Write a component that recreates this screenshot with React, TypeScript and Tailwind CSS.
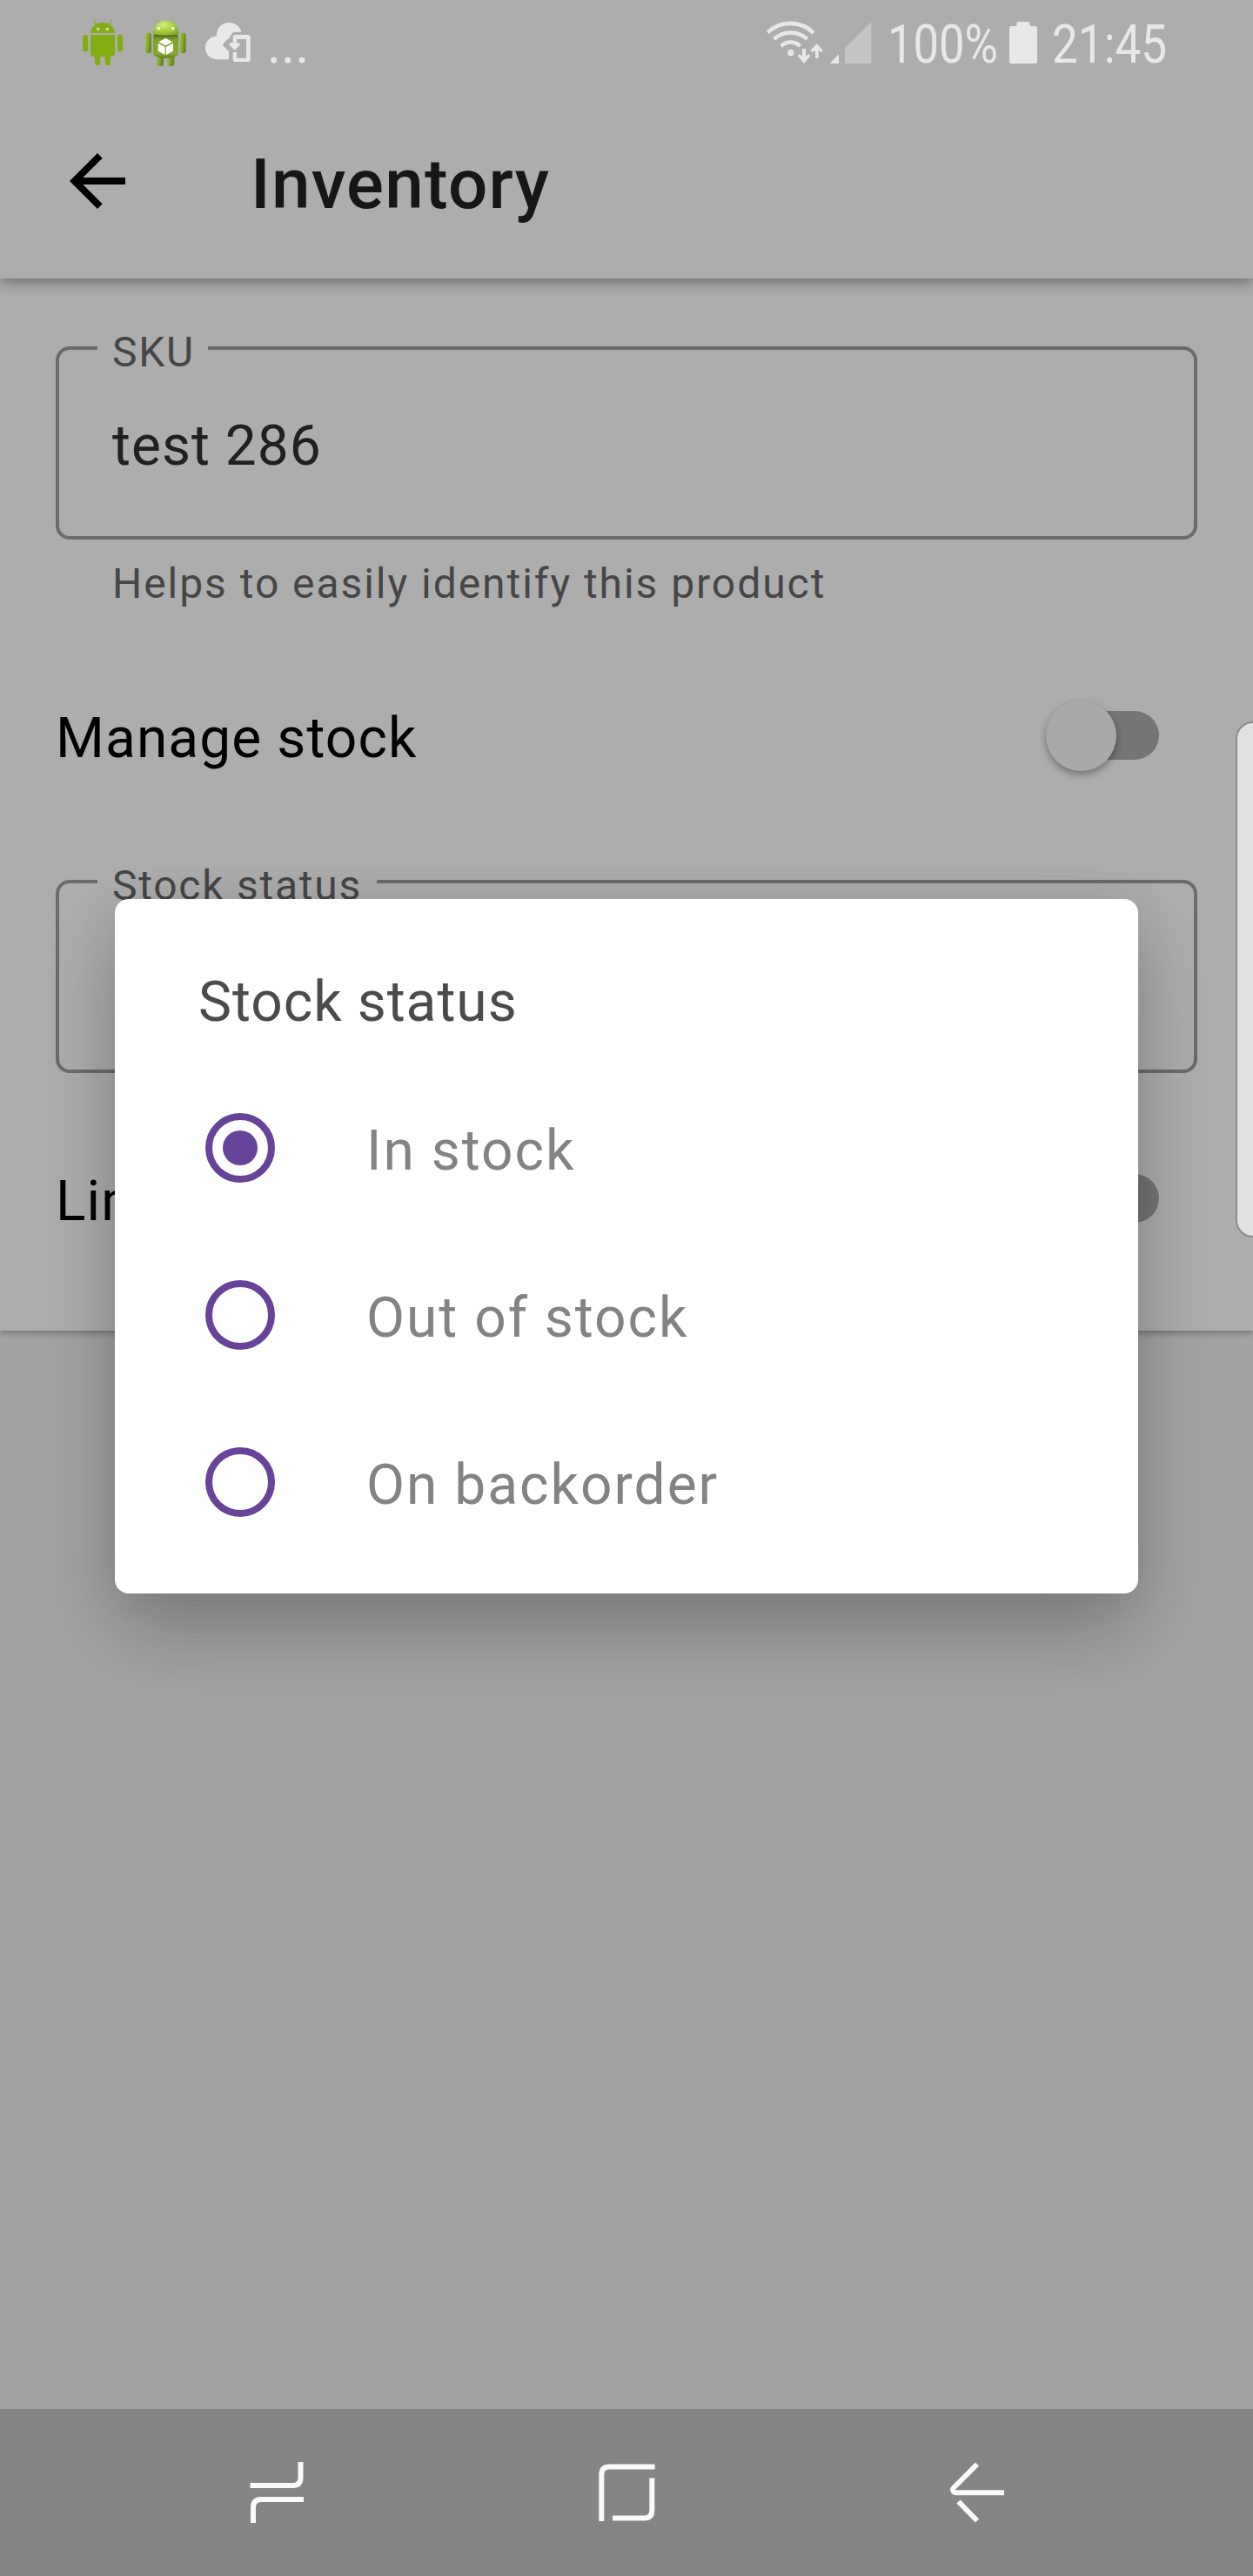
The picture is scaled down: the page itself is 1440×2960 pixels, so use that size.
import React from "react";

const options = [
  { label: "In stock", selected: true },
  { label: "Out of stock", selected: false },
  { label: "On backorder", selected: false },
];

function AndroidIcon() {
  return (
    <svg className="h-[60px] w-[50px]" viewBox="39 30 150 180" fill="#82ad12">
      <path d="M84 39l8 14M144 39l-8 14" stroke="#82ad12" strokeWidth="3.5" strokeLinecap="round" />
      <path d="M72 84C73 62 91 48 114 48s41 14 42 36z" />
      <circle cx="98" cy="70" r="5" fill="#d5dfc0" />
      <circle cx="130" cy="70" r="5" fill="#d5dfc0" />
      <path d="M72 90h84v63a12 12 0 0 1-12 12h-3v21a9.500 9.500 0 0 1-19 0v-21h-16v21a9.500 9.500 0 0 1-19 0v-21h-3a12 12 0 0 1-12-12z" />
      <rect x="45" y="90" width="18.500" height="58" rx="9.250" />
      <rect x="164.500" y="90" width="18.500" height="58" rx="9.250" />
    </svg>
  );
}

function DebugAndroidIcon() {
  return (
    <svg className="h-[60px] w-[50px]" viewBox="255 30 150 180">
      <defs>
        <linearGradient id="limb" x1="0" x2="1" y1="0" y2="0.3">
          <stop offset="0" stopColor="#a5c947" />
          <stop offset="0.5" stopColor="#86a832" />
          <stop offset="1" stopColor="#64851f" />
        </linearGradient>
        <linearGradient id="torso" x1="0" x2="0" y1="0" y2="1">
          <stop offset="0" stopColor="#5f7f1c" />
          <stop offset="0.2" stopColor="#7fa22b" />
          <stop offset="0.8" stopColor="#86a832" />
          <stop offset="1" stopColor="#5f7f22" />
        </linearGradient>
        <radialGradient id="dome" cx="0.4" cy="0.3" r="0.8">
          <stop offset="0" stopColor="#d5f07c" />
          <stop offset="0.5" stopColor="#a6d03c" />
          <stop offset="1" stopColor="#7fa526" />
        </radialGradient>
      </defs>
      <path d="M301 36l9 14M362 36l-9 14" stroke="#9bbd4a" strokeWidth="4" strokeLinecap="round" />
      <rect x="300" y="150" width="24" height="48" rx="10" fill="url(#limb)" />
      <rect x="337" y="150" width="24" height="48" rx="10" fill="url(#limb)" />
      <rect x="261" y="83" width="21" height="71" rx="9" fill="url(#limb)" />
      <rect x="380" y="83" width="21" height="71" rx="9" fill="url(#limb)" />
      <path d="M288 92h87v62c0 10-18 17-43 17s-44-7-44-17z" fill="url(#torso)" />
      <path d="M287 87c0-28 20-46 45-46s45 18 45 46c-22 7-68 7-90 0z" fill="url(#dome)" />
      <path d="M291 90c20 5 62 5 82 0" stroke="#3f5a0c" strokeWidth="3" fill="none" />
      <circle cx="307" cy="68" r="5" fill="#fff" />
      <circle cx="356" cy="68" r="5" fill="#fff" />
      <path d="M331 101l24 14-24 12-24-12zM305 119l24 12v28l-24-13zM357 119l-24 12v28l24-13z" fill="#fff" />
    </svg>
  );
}

function CloudSyncIcon() {
  return (
    <svg className="h-[60px] w-[55px]" viewBox="465 30 165 180">
      <path
        d="M549 175H510c-24 0-42-17-42-40 0-22 16-38 39-41-2-26 16-46 42-46 22 0 39 13 43 32h-20c-9 0-15 5-17 14l-7 11h-4l-14 16q-3 3 0 7l19 18z"
        fill="#e8e8e8"
      />
      <path
        fillRule="evenodd"
        d="M573 90h40a10 10 0 0 1 10 10v73a10 10 0 0 1-10 10h-40a10 10 0 0 1-10-10v-23h13v20h33v-65h-33v13h8l5 5-20 21-20-21 5-5h9v-18a10 10 0 0 1 10-10z"
        fill="#e8e8e8"
      />
    </svg>
  );
}

function WifiIcon() {
  return (
    <svg className="h-[60px] w-[70px]" viewBox="30 30 210 180" fill="none" stroke="#e8e8e8">
      <path d="M37 82C80 40 152 40 195 84" strokeWidth="14" />
      <path d="M59 105C91 75 141 75 173 105" strokeWidth="13.500" />
      <path d="M83 129C102 111 130 111 149 129" strokeWidth="13" />
      <circle cx="116" cy="152" r="11" fill="#e8e8e8" stroke="none" />
      <path d="M156 138h12v27l9-9 7 7-22 26-22-26 7-7 9 9zM201 171h11v-27l9 6 7-6-22-23-22 23 7 6 10-6z" fill="#e8e8e8" stroke="none" />
    </svg>
  );
}

function SignalIcon() {
  return (
    <svg className="h-[60px] w-[50px]" viewBox="246 30 150 180">
      <path d="M282 157v32h-31z" fill="#e8e8e8" />
      <path d="M394 46v143h-91v-54z" fill="#c4c4c4" />
    </svg>
  );
}

function BatteryIcon() {
  return (
    <svg className="h-[60px] w-[34px]" viewBox="867 30 102 180">
      <path d="M901 45h34q6 0 6 6v9h18q7 0 7 7v115q0 7-7 7h-82q-7 0-7-7V67q0-7 7-7h18v-9q0-6 6-6z" fill="#e8e8e8" />
    </svg>
  );
}

function StatusBar() {
  return (
    <div className="flex h-24 items-start pt-5 pl-[93px] text-[61px] leading-[62px] text-[#e8e8e8]">
      <AndroidIcon />
      <div className="w-[22px]" />
      <DebugAndroidIcon />
      <div className="w-5" />
      <CloudSyncIcon />
      <span className="ml-[17px] w-[573px]">...</span>
      <WifiIcon />
      <div className="w-0.5" />
      <SignalIcon />
      <span className="w-[157px] pl-[18px]">
        <span className="inline-block origin-left scale-x-[0.86]">100%</span>
      </span>
      <BatteryIcon />
      <span className="pl-4">
        <span className="inline-block origin-left scale-x-[0.87]">21:45</span>
      </span>
    </div>
  );
}

function Field({ label, value, labelWidth }: { label: string; value: string; labelWidth: string }) {
  return (
    <div className="relative flex h-[222px] items-center rounded-[16px] border-4 border-[#6b6b6b] pl-[61px]">
      <span
        className={`absolute -top-[21px] left-11 bg-[#adadad] pl-[17px] text-[48px] leading-[48px] tracking-[1.750px] whitespace-nowrap text-[#464646] ${labelWidth}`}
      >
        {label}
      </span>
      <span className="pt-2 text-[64px] leading-[76px] tracking-[1px] text-[#202020]">{value}</span>
    </div>
  );
}

function ToggleRow({ label }: { label: string }) {
  return (
    <div className="flex h-20 items-center justify-between pr-11">
      <span className="pt-2 text-[64px] leading-[76px] tracking-[1.100px] text-black">{label}</span>
      <span className="flex h-14 w-[126px] items-center rounded-full bg-[#757575]">
        <span className="-ml-1 size-[81px] shrink-0 rounded-full bg-[#a9a9a9] shadow-[0_4px_8px_rgba(0,0,0,0.35)]" />
      </span>
    </div>
  );
}

function StockDialog() {
  return (
    <div className="absolute top-[1033px] left-[132px] h-[798px] w-[1176px] rounded-[16px] bg-white pt-[79px] shadow-[0_44px_90px_rgba(0,0,0,0.24),0_0_50px_rgba(0,0,0,0.06)]">
      <h2 className="mb-[31px] pl-24 text-[64px] leading-[80px] tracking-[1px] text-[#4b4b4b]">Stock status</h2>
      {options.map((option) => (
        <div key={option.label} className="flex h-48 items-center pl-[104px]">
          <span className="flex size-20 items-center justify-center rounded-full border-8 border-[#674399]">
            {option.selected && <span className="size-10 rounded-full bg-[#674399]" />}
          </span>
          <span className="pt-2 pl-[105px] text-[64px] leading-[76px] tracking-[2px] text-[#838383]">{option.label}</span>
        </div>
      ))}
    </div>
  );
}

function NavBar() {
  return (
    <div className="flex h-48 items-center bg-[#858585] pl-[278px]">
      <svg className="h-20 w-20" viewBox="278 2824 80 80" fill="none" stroke="#fafafa" strokeWidth="6">
        <path d="M287.500 2856h49q9 0 9-9v-18M349 2872h-49q-9 0-9 9v18" />
      </svg>
      <svg className="ml-[322px] h-20 w-20" viewBox="680 2824 80 80" fill="none" stroke="#fafafa" strokeWidth="6">
        <path d="M752.500 2834.500H700.300q-9 0-9 9V2897M704 2893.500h36.300q9 0 9-9V2847.500" />
      </svg>
      <svg className="ml-[322px] h-20 w-20" viewBox="1082 2824 80 80" fill="none" stroke="#fafafa" strokeWidth="6">
        <path d="M1154 2864.300H1098.500a3.400 3.400 0 0 1-2.400-5.800L1123 2831.500M1101.500 2874.500l21.500 22" />
      </svg>
    </div>
  );
}

export default function App() {
  return (
    <div className="relative flex h-[2960px] w-[1440px] flex-col overflow-hidden bg-[#a3a3a3] font-['Roboto',sans-serif]">
      <header className="relative h-80 bg-[#adadad] shadow-[0_4px_16px_rgba(0,0,0,0.4)]">
        <StatusBar />
        <div className="flex h-56 items-center pl-20">
          <svg className="size-16" viewBox="4 4 16 16" fill="#000">
            <path d="M20 11H7.830l5.590-5.590L12 4l-8 8 8 8 1.410-1.410L7.830 13H20v-2z" />
          </svg>
          <h1 className="pt-2 pl-36 text-[80px] leading-[96px] font-medium tracking-[1.250px] text-[#161616]">Inventory</h1>
        </div>
      </header>
      <main className="h-[1209px] bg-[#adadad] px-16 pt-[78px] shadow-[0_2px_8px_rgba(0,0,0,0.35)]">
        <Field label="SKU" value="test 286" labelWidth="w-[127px]" />
        <p className="mt-[23px] mb-[106px] pl-[65px] text-[48px] leading-[56px] tracking-[1.950px] text-[#464646]">
          Helps to easily identify this product
        </p>
        <ToggleRow label="Manage stock" />
        <div className="h-[126px]" />
        <Field label="Stock status" value="" labelWidth="w-[321px]" />
        <div className="h-[104px]" />
        <ToggleRow label="Limit" />
      </main>
      <div className="grow" />
      <NavBar />
      <div className="absolute top-[829px] left-[1420px] h-[593px] w-8 rounded-l-[20px] border-2 border-[#8c8c8c] bg-[#e1e1e1]" />
      <StockDialog />
    </div>
  );
}
